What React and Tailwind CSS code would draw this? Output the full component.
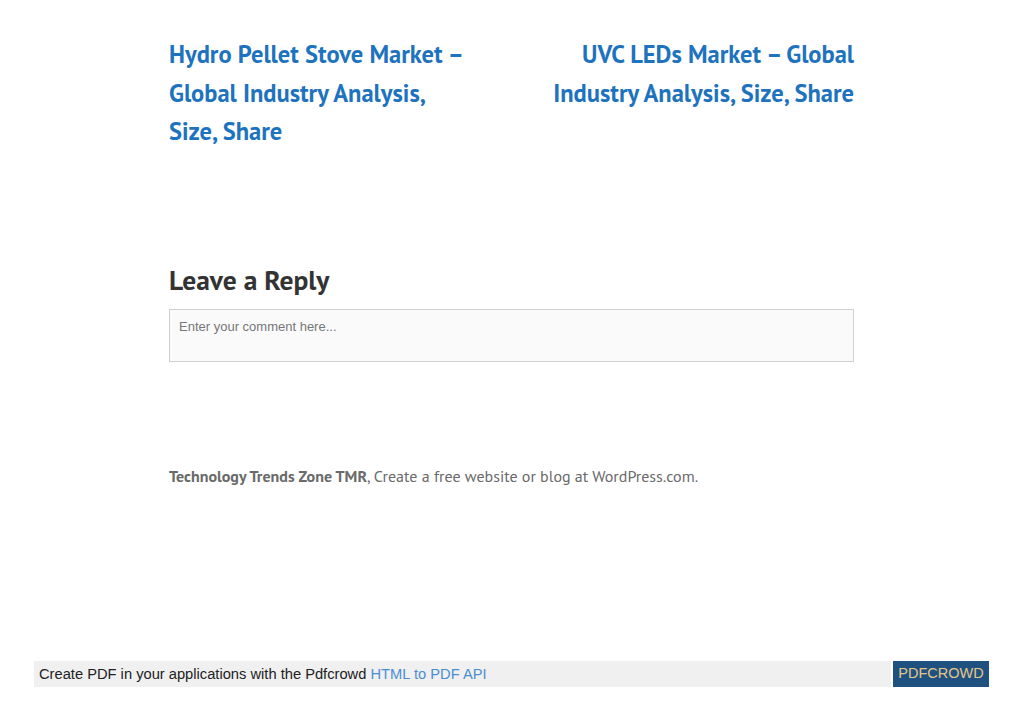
export default function App() {
  const serif = { fontFamily: "'PT Sans', Roboto, 'Liberation Sans', sans-serif" };
  return (
    <div className="relative min-h-[724px] w-[1023px] bg-white">
      <div className="mx-auto w-[685px] pt-[35px]" style={serif}>
        {/* Post navigation */}
        <div className="flex justify-between">
          <a className="block w-[305px] text-[24.5px] font-bold leading-[38.5px] text-[#1e73be]">
            Hydro Pellet Stove Market – Global Industry Analysis, Size, Share
          </a>
          <a className="block w-[310px] text-right text-[24.5px] font-bold leading-[38.5px] text-[#1e73be]">
            UVC LEDs Market – Global Industry Analysis, Size, Share
          </a>
        </div>

        {/* Comments */}
        <h3 className="mt-[111px] text-[27.5px] font-bold leading-[36px] text-[#333]">
          Leave a Reply
        </h3>
        <div className="mt-[11px] h-[53px] border border-[#d0d0d0] bg-[#fafafa] px-[9px] pt-[3px]">
          <span
            className="text-[13px] text-[#777]"
            style={{ fontFamily: "'Liberation Sans', Arial, sans-serif" }}
          >
            Enter your comment here...
          </span>
        </div>

        {/* Site info */}
        <p className="mt-[102px] text-[16px] text-[#6a6a6a]">
          <span className="font-bold">Technology Trends Zone TMR</span>, Create a free website or blog at WordPress.com.
        </p>
      </div>

      {/* Pdfcrowd bar */}
      <div
        className="absolute left-[34px] top-[661px] flex h-[26px] w-[955px] items-center"
        style={{ fontFamily: "'Liberation Sans', Arial, sans-serif" }}
      >
        <div className="flex h-full flex-1 items-center bg-[#f0f0f0] pl-[5px] text-[14.7px] text-[#222]">
          Create PDF in your applications with the Pdfcrowd&nbsp;
          <span className="text-[#4a8ed0]">HTML to PDF API</span>
        </div>
        <div className="ml-[2px] flex h-full w-[96px] items-center justify-center bg-[#1f5180] text-[14.5px] text-[#e6c58a]">
          PDFCROWD
        </div>
      </div>
    </div>
  );
}
